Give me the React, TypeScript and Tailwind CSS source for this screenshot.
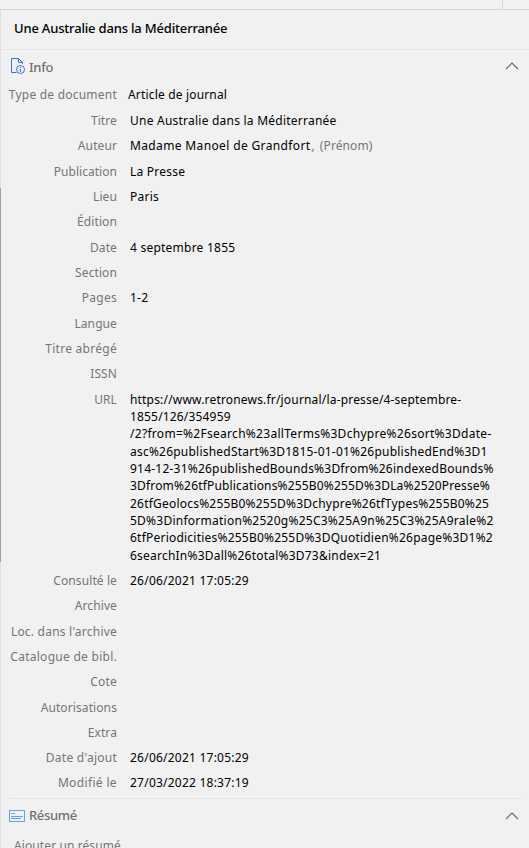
import React from 'react';

interface Field {
    label: string;
    value?: string;
    labelClass?: string;
}

const URL_LINES = [
    { text: 'https://www.retronews.fr/journal/la-presse/4-septembre-', className: 'tracking-[0.18px]' },
    { text: '1855/126/354959', className: 'tracking-[0.17px]' },
    { text: '/2?from=%2Fsearch%23allTerms%3Dchypre%26sort%3Ddate-', className: 'tracking-[0.29px]' },
    { text: 'asc%26publishedStart%3D1815-01-01%26publishedEnd%3D1', className: 'tracking-[0.22px]' },
    { text: '914-12-31%26publishedBounds%3Dfrom%26indexedBounds%', className: 'tracking-[0.22px]' },
    { text: '3Dfrom%26tfPublications%255B0%255D%3DLa%2520Presse%', className: 'tracking-[0.17px]' },
    { text: '26tfGeolocs%255B0%255D%3Dchypre%26tfTypes%255B0%25', className: 'tracking-[0.21px]' },
    { text: '5D%3Dinformation%2520g%25C3%25A9n%25C3%25A9rale%2', className: 'tracking-[0.25px]' },
    { text: '6tfPeriodicities%255B0%255D%3DQuotidien%26page%3D1%2', className: 'tracking-[0.22px]' },
    { text: '6searchIn%3Dall%26total%3D73&index=21', className: 'tracking-[0.22px]' },
];

const FIELDS_BEFORE: Field[] = [
    { label: 'Publication', value: 'La Presse', labelClass: 'tracking-[0.03px]' },
    { label: 'Lieu', value: 'Paris' },
    { label: 'Édition' },
    { label: 'Date', value: '4 septembre 1855' },
    { label: 'Section' },
    { label: 'Pages', value: '1-2', labelClass: 'tracking-[0.25px]' },
    { label: 'Langue' },
    { label: 'Titre abrégé', labelClass: 'tracking-[0.27px]' },
    { label: 'ISSN' },
];

const FIELDS_AFTER: Field[] = [
    { label: 'Consulté le', value: '26/06/2021 17:05:29' },
    { label: 'Archive' },
    { label: "Loc. dans l'archive", labelClass: 'tracking-[0.22px]' },
    { label: 'Catalogue de bibl.', labelClass: 'tracking-[0.27px]' },
    { label: 'Cote', labelClass: 'tracking-[0.2px]' },
    { label: 'Autorisations' },
    { label: 'Extra' },
    { label: "Date d'ajout", value: '26/06/2021 17:05:29', labelClass: 'tracking-[0.25px]' },
    { label: 'Modifié le', value: '27/03/2022 18:37:19', labelClass: 'tracking-[0.35px]' },
];

const Row: React.FC<{ label: string; labelClass?: string; children?: React.ReactNode }> = ({ label, labelClass = '', children }) => (
    <div className="flex items-start gap-[13px] py-1">
        <div className={`w-[116px] shrink-0 text-right whitespace-nowrap text-[#757575] ${labelClass}`}>{label}</div>
        <div className="min-w-0 whitespace-nowrap text-black tracking-[0.23px]">{children}</div>
    </div>
);

const Chevron = () => (
    <svg className="w-[14px] h-2 mr-[10px]" viewBox="0 0 14 8" fill="none" stroke="#666" strokeWidth="1.1">
        <path d="M1 7 L7 1 L13 7" />
    </svg>
);

const InfoIcon = () => (
    <svg className="w-4 h-4" viewBox="0 0 16 16" fill="none" stroke="#3b6fe5">
        <path d="M6.5 14.5 H1.5 V0.5 H8.5 L12.5 4.5 V6" />
        <path d="M8.5 0.5 V4.5 H12.5" />
        <circle cx="10.5" cy="11.5" r="4" />
        <path d="M10.5 11 V14 M10.5 9 V10" />
    </svg>
);

const AbstractIcon = () => (
    <svg className="w-4 h-3" viewBox="0 0 16 12" fill="none" stroke="#5ea5fa">
        <rect x="0.5" y="0.5" width="15" height="11" />
        <path d="M2 3.5 H6 M2 6.5 H14 M2 8.5 H12" />
    </svg>
);

export default function App() {
    return (
        <div className="relative w-full h-[848px] overflow-hidden bg-[#f1f1f1] font-['Noto_Sans','Open_Sans',sans-serif] text-[12px] leading-[17.333px] tracking-[0.1px]">
            <div className="h-[10px] flex border-b border-[#d6d6d6]">
                <div className="w-[503px] border-r border-[#d6d6d6]" />
            </div>
            <div className="h-[838px] border-l border-[#e0e0e0]">
                <div className="h-10 flex items-center pl-[13px] pb-px border-b border-[#e3e3e3] text-[13px] font-medium tracking-[-0.18px] text-black whitespace-nowrap">
                    Une Australie dans la Méditerranée
                </div>

                <div className="h-[32px] flex items-center pl-[9px]">
                    <InfoIcon />
                    <span className="flex-1 pl-[3px] pt-[3px] text-[13px] font-medium tracking-[-0.3px] text-[#707070]">Info</span>
                    <Chevron />
                </div>

                <div className="flex items-start gap-[11px] pt-1 pb-[4.65px]">
                    <div className="w-[116px] shrink-0 text-right whitespace-nowrap text-[#757575] tracking-[0.22px]">Type de document</div>
                    <div className="whitespace-nowrap text-black tracking-[0.17px]">Article de journal</div>
                </div>
                <Row label="Titre">Une Australie dans la Méditerranée</Row>
                <Row label="Auteur">
                    <span className="tracking-[0.36px]">Madame Manoel de Grandfort</span>
                    <span className="ml-px mr-1 text-[#757575]">,</span>
                    <span className="ml-px text-[#757575] tracking-[0.1px]">(Prénom)</span>
                </Row>
                {FIELDS_BEFORE.map((f) => (
                    <Row key={f.label} label={f.label} labelClass={f.labelClass}>
                        {f.value}
                    </Row>
                ))}
                <Row label="URL">
                    {URL_LINES.map((line) => (
                        <div key={line.text} className={line.className}>{line.text}</div>
                    ))}
                </Row>
                {FIELDS_AFTER.map((f) => (
                    <Row key={f.label} label={f.label} labelClass={f.labelClass}>
                        {f.value}
                    </Row>
                ))}

                <div className="ml-2 mr-[7px] mt-[2.35px] border-t border-[#e3e3e3]" />
                <div className="h-[34px] flex items-center pl-2">
                    <AbstractIcon />
                    <span className="flex-1 pl-1 text-[13px] font-medium tracking-[-0.35px] text-[#707070]">Résumé</span>
                    <Chevron />
                </div>
                <div className="pl-[13px] pt-1 text-[#757575]">Ajouter un résumé</div>
            </div>

            {/* scroll thumb of the neighbouring pane */}
            <div className="absolute left-0 top-[188px] w-px h-[374px] bg-[#a0a0a0]" />
        </div>
    );
}
